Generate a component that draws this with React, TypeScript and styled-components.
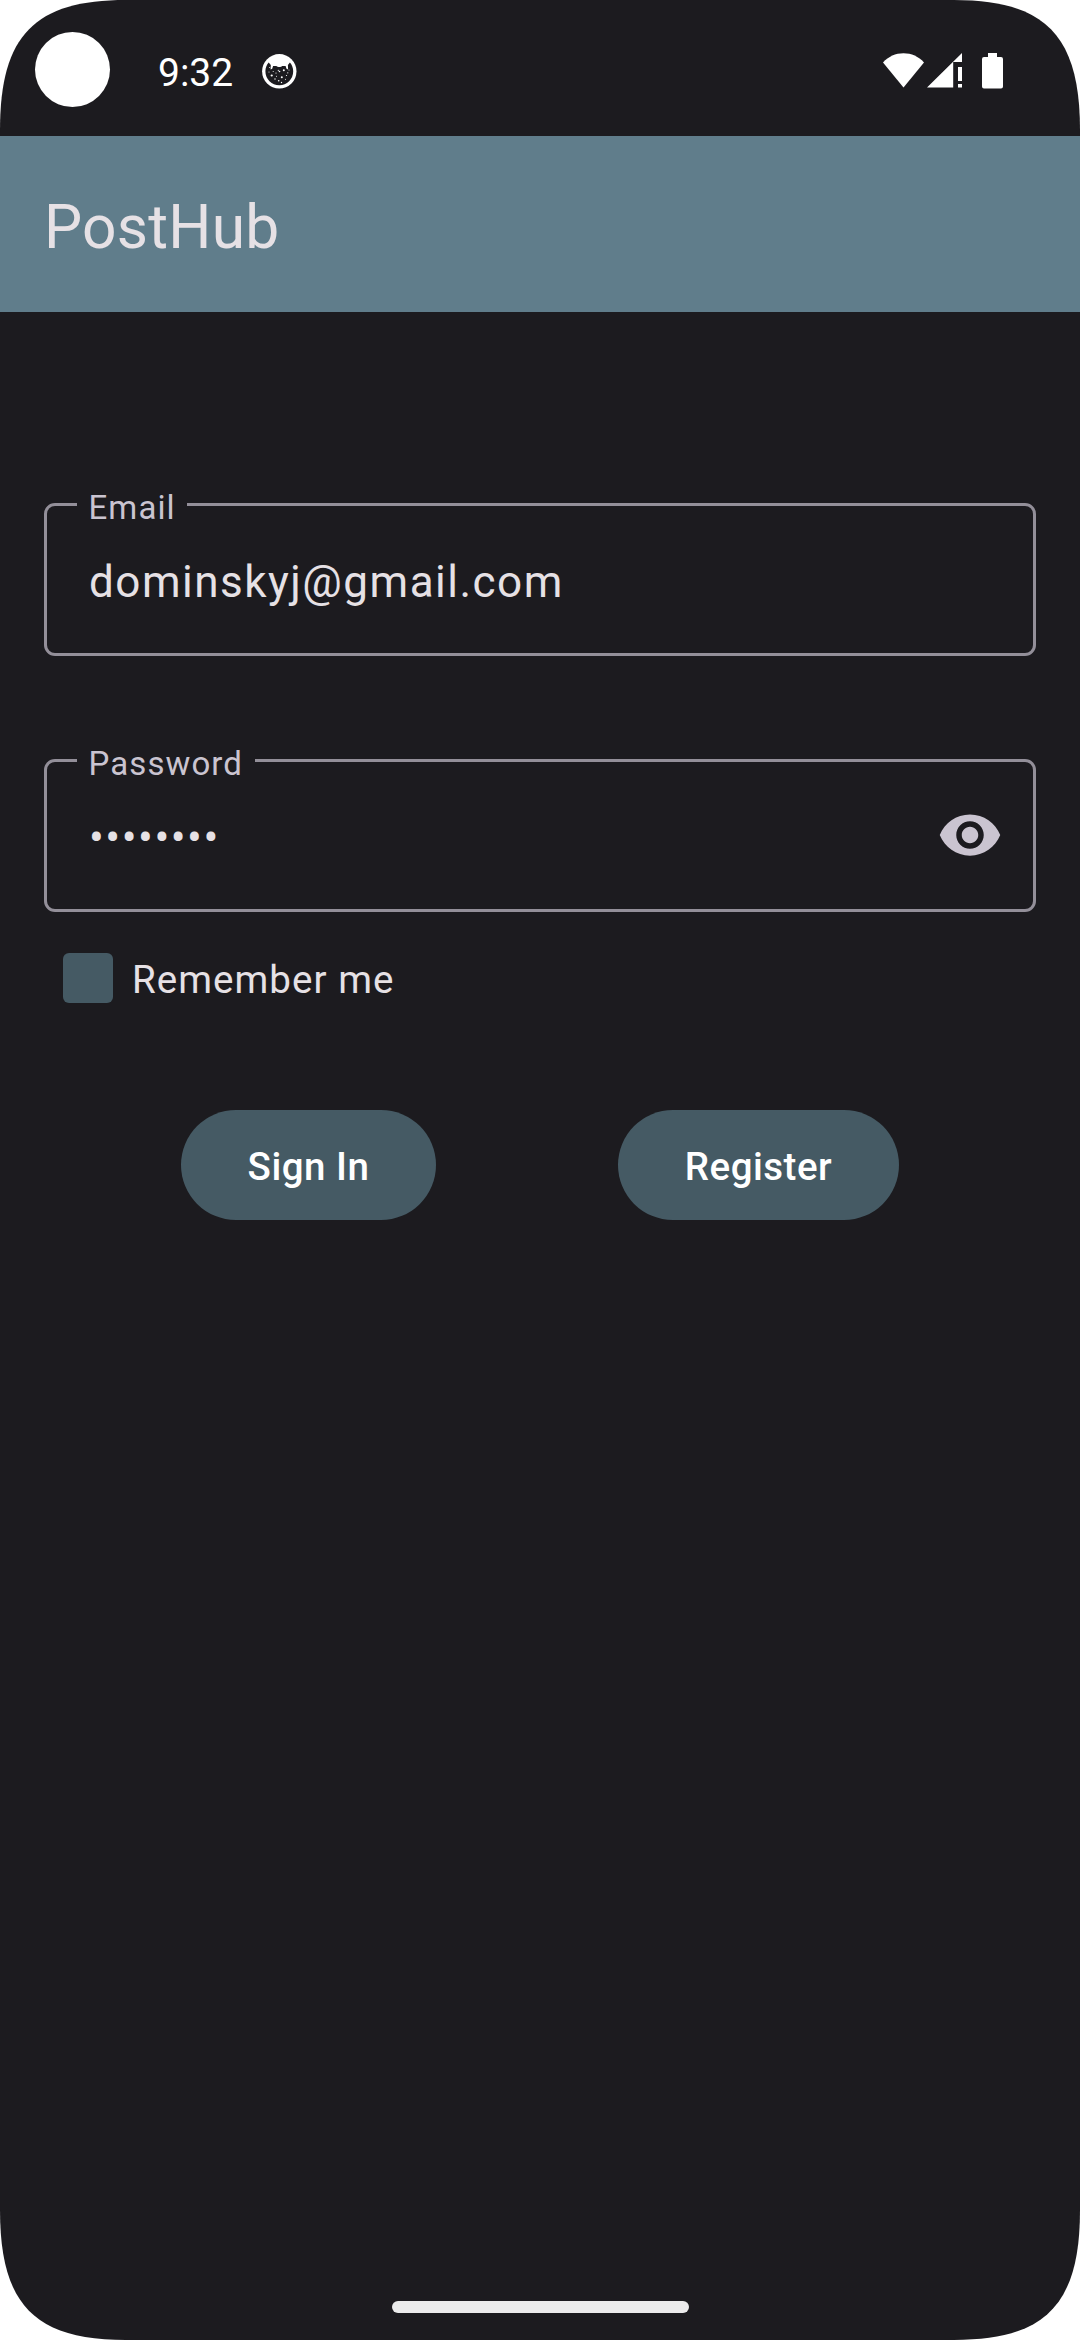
import React, { useState } from "react";
import styled, { createGlobalStyle } from "styled-components";

const color = {
  surface: "#1c1b1f",
  onSurface: "#e6e1e5",
  onSurfaceVariant: "#cac4d0",
  outline: "#938f99",
  bar: "#607d8b",
  primary: "#455a64",
};

const GlobalStyle = createGlobalStyle`
  body { margin: 0; background: #fff; font-family: Roboto, "Noto Sans", sans-serif; }
  *, *::before, *::after { box-sizing: border-box; }
`;

const Screen = styled.div`
  width: 1080px;
  height: 2340px;
  display: flex;
  flex-direction: column;
  background: ${color.surface};
  color: ${color.onSurface};
  clip-path: path("M0 130C0 35 35 0 126 0H954C1045 0 1080 35 1080 130V2210C1080 2305 1045 2340 954 2340H126C35 2340 0 2305 0 2210Z");
`;

const StatusBar = styled.header`
  height: 136px;
  padding: 3px 76px 0 35px;
  display: flex;
  align-items: center;
  color: #fff;
`;

const CameraHole = styled.div`
  width: 75px;
  height: 75px;
  border-radius: 50%;
  background: #fff;
`;

const Clock = styled.time`
  margin: 6px 0 0 48px;
  font-size: 39px;
  line-height: 46px;
  width: 104px;
`;

const Glyph = styled.svg<{ $gap?: number }>`
  display: block;
  flex: none;
  margin-left: ${(p) => p.$gap ?? 0}px;
  margin-top: 3px;
`;

const StatusIcons = styled.div`
  margin-left: auto;
  display: flex;
  align-items: center;
`;

const AppBar = styled.div`
  height: 176px;
  padding: 7px 44px 0;
  display: flex;
  align-items: center;
  background: ${color.bar};
`;

const Title = styled.h1`
  margin: 0;
  font-size: 60.5px;
  font-weight: 400;
  line-height: 77px;
  letter-spacing: 0.25px;
`;

const Form = styled.form`
  flex: 1;
  padding: 171px 44px 0;
  display: flex;
  flex-direction: column;
`;

const Field = styled.fieldset`
  height: 173px;
  margin: 0 0 83px;
  padding: 0 30px 0 30px;
  border: 3px solid ${color.outline};
  border-radius: 11px;
  min-width: 0;
`;

const Label = styled.legend`
  height: 43px;
  padding: 6px 11.5px 0 11.5px;
  font-size: 33px;
  line-height: 37px;
  letter-spacing: 1.1px;
  color: ${color.onSurfaceVariant};
`;

const FieldBody = styled.div`
  height: 106px;
  padding-left: 12px;
  display: flex;
  align-items: center;
  justify-content: space-between;
`;

const Value = styled.span`
  padding-top: 6px;
  font-size: 44px;
  line-height: 66px;
  letter-spacing: 1.5px;
`;

const IconButton = styled.button`
  margin: 0;
  padding: 0;
  border: 0;
  background: none;
  color: ${color.onSurfaceVariant};
  svg { display: block; }
`;

const Remember = styled.label`
  height: 50px;
  margin: -42px 0 0 19px;
  display: flex;
  align-items: center;
`;

const Box = styled.span`
  width: 50px;
  height: 50px;
  border-radius: 6px;
  background: ${color.primary};
`;

const RememberText = styled.span`
  margin: 3px 0 0 19px;
  font-size: 38.5px;
  line-height: 55px;
  letter-spacing: 1.05px;
`;

const Actions = styled.div`
  margin-top: 107px;
  padding: 0 137px;
  display: flex;
  justify-content: space-between;
`;

const PillButton = styled.button<{ $width: number }>`
  width: ${(p) => p.$width}px;
  height: 110px;
  padding: 2px 0 0;
  border: 0;
  border-radius: 55px;
  background: ${color.primary};
  color: #fff;
  font: 500 38.5px/55px Roboto, "Noto Sans", sans-serif;
  letter-spacing: 0.5px;
`;

const NavBar = styled.footer`
  height: 66px;
  padding-top: 27.4px;
  display: flex;
  justify-content: center;
`;

const HomeHandle = styled.div`
  width: 297px;
  height: 11.2px;
  border-radius: 6px;
  background: #ececec;
`;

const specks = [
  [9.7, 21.5, 1.1], [14, 19, 0.6], [17.5, 17.5, 0.8], [21.8, 16.3, 1], [19.8, 23.3, 1],
  [7, 18, 0.5], [13, 25, 0.7], [16.7, 26.8, 0.8], [24.5, 21.5, 0.6], [14.5, 22.3, 0.5],
  [11.2, 17.5, 0.5], [23.5, 25.3, 0.5], [19.5, 28.5, 0.7], [7.7, 13.5, 0.5], [27, 16, 0.5],
  [16.3, 16.3, 0.6], [25.8, 18.8, 0.6],
];

const CatBadge = () => (
  <Glyph width="35" height="35" viewBox="0 0 35 35">
    <circle cx="17.3" cy="17.3" r="17.2" fill="#fff" />
    <path
      fill={color.surface}
      d="M6.7 8.6C4.7 10.9 3.4 14 3.4 17.3a13.9 13.9 0 0 0 27.8 0c0-3.3-1.3-6.4-3.3-8.7l-2 2.4.2 4.4-1.6-.6-.9-2.7-3.4-.1c-1.2 1.4-4.5 1.4-5.8 0l-3.3.1-.9 2.7-1.6.6.2-4.4z"
    />
    {specks.map(([x, y, r]) => (
      <circle key={`${x}-${y}`} cx={x} cy={y} r={r} fill="#fff" />
    ))}
  </Glyph>
);

const App: React.FC = () => {
  const [visible, setVisible] = useState(false);
  return (
    <>
      <GlobalStyle />
      <Screen>
        <StatusBar>
          <CameraHole />
          <Clock>9:32</Clock>
          <CatBadge />
          <StatusIcons>
            <Glyph width="41" height="36" viewBox="0 0 41 36" fill="#fff">
              <path d="M0 9.5C5.5 3.5 12.5.3 20.5.3S35.5 3.5 41 9.5L20.5 34.5z" />
            </Glyph>
            <Glyph $gap={3} width="36" height="36" viewBox="0 0 36 36" fill="#fff">
              <path d="M0 34.6L35 0V9H26.2V34.6zM31 14h4v14h-4zM31 31h4v3.6h-4z" />
            </Glyph>
            <Glyph $gap={19} width="22" height="36" viewBox="0 0 22 36" fill="#fff">
              <path d="M6 0h9v4h4a2 2 0 0 1 2 2v27.6a2 2 0 0 1-2 2H2a2 2 0 0 1-2-2V6a2 2 0 0 1 2-2h4z" />
            </Glyph>
          </StatusIcons>
        </StatusBar>

        <AppBar>
          <Title>PostHub</Title>
        </AppBar>

        <Form onSubmit={(e) => e.preventDefault()}>
          <Field>
            <Label>Email</Label>
            <FieldBody>
              <Value>dominskyj@gmail.com</Value>
            </FieldBody>
          </Field>
          <Field>
            <Label>Password</Label>
            <FieldBody>
              <Value>••••••••</Value>
              <IconButton type="button" onClick={() => setVisible(!visible)}>
                <svg width="66" height="66" viewBox="0 0 24 24" fill="currentColor">
                  <path d="M12 4.5C7 4.5 2.73 7.61 1 12c1.73 4.39 6 7.5 11 7.5s9.27-3.11 11-7.5c-1.73-4.39-6-7.5-11-7.5zM12 17c-2.76 0-5-2.24-5-5s2.24-5 5-5 5 2.24 5 5-2.24 5-5 5zm0-8c-1.66 0-3 1.34-3 3s1.34 3 3 3 3-1.34 3-3-1.34-3-3-3z" />
                </svg>
              </IconButton>
            </FieldBody>
          </Field>

          <Remember>
            <Box />
            <RememberText>Remember me</RememberText>
          </Remember>

          <Actions>
            <PillButton type="submit" $width={255}>Sign In</PillButton>
            <PillButton type="button" $width={281}>Register</PillButton>
          </Actions>
        </Form>

        <NavBar>
          <HomeHandle />
        </NavBar>
      </Screen>
    </>
  );
};

export default App;
